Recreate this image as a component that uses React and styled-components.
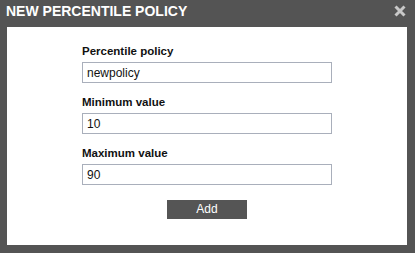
import React from "react";
import styled, { createGlobalStyle } from "styled-components";

const Global = createGlobalStyle`
  html, body { margin: 0; padding: 0; background: #545454; }
  body { font-family: "Liberation Sans", Arial, sans-serif; }
`;

const Dialog = styled.div`
  width: 415px;
  height: 253px;
  background: #545454;
  display: flex;
  flex-direction: column;
  box-sizing: border-box;
`;

const Header = styled.div`
  height: 27px;
  flex: none;
  display: flex;
  align-items: flex-start;
  justify-content: space-between;
  padding: 2.5px 9px 0 6px;
  box-sizing: border-box;
`;

const Title = styled.h1`
  margin: 0;
  font-size: 14px;
  line-height: 16px;
  font-weight: bold;
  color: #ffffff;
  font-family: "Liberation Sans", Arial, sans-serif;
`;

const Close = styled.button`
  margin: 2.5px 0 0;
  padding: 0;
  border: 0;
  background: none;
  width: 12px;
  height: 12px;
  display: block;
  cursor: pointer;
  svg { display: block; }
`;

const Body = styled.div`
  flex: 1;
  background: #ffffff;
  margin: 0 8px 8px 7px;
  display: flex;
  flex-direction: column;
  align-items: center;
  padding-top: 17px;
  box-sizing: border-box;
`;

const Form = styled.div`
  width: 250px;
  display: flex;
  flex-direction: column;
`;

const Field = styled.div`
  display: flex;
  flex-direction: column;
  margin-bottom: ${(p) => (p.$last ? "0" : "12px")};
`;

const Label = styled.label`
  font-size: 11.5px;
  line-height: 14px;
  font-weight: bold;
  color: #111;
  margin-bottom: 4px;
`;

const Input = styled.input`
  box-sizing: border-box;
  width: 250px;
  height: 21px;
  border: 1px solid #a9afbb;
  padding: 0 4px;
  margin: 0;
  font-family: "Liberation Sans", Arial, sans-serif;
  font-size: 12px;
  color: #111;
  outline: none;
  background: #fff;
`;

const AddButton = styled.button`
  margin-top: 15px;
  width: 80px;
  height: 19px;
  border: 0;
  padding: 0;
  background: #555555;
  color: #ffffff;
  font-family: "Liberation Sans", Arial, sans-serif;
  font-size: 12px;
  line-height: 19px;
  cursor: pointer;
`;

export default function App() {
  return (
    <>
      <Global />
      <Dialog>
        <Header>
          <Title>NEW PERCENTILE POLICY</Title>
          <Close aria-label="Close">
            <svg width="12" height="12" viewBox="0 0 12 12">
              <path d="M1.5 1.5 L10.5 10.5 M10.5 1.5 L1.5 10.5" stroke="#c8c8c8" strokeWidth="3" />
            </svg>
          </Close>
        </Header>
        <Body>
          <Form>
            <Field>
              <Label>Percentile policy</Label>
              <Input defaultValue="newpolicy" />
            </Field>
            <Field>
              <Label>Minimum value</Label>
              <Input defaultValue="10" />
            </Field>
            <Field $last>
              <Label>Maximum value</Label>
              <Input defaultValue="90" />
            </Field>
          </Form>
          <AddButton>Add</AddButton>
        </Body>
      </Dialog>
    </>
  );
}
